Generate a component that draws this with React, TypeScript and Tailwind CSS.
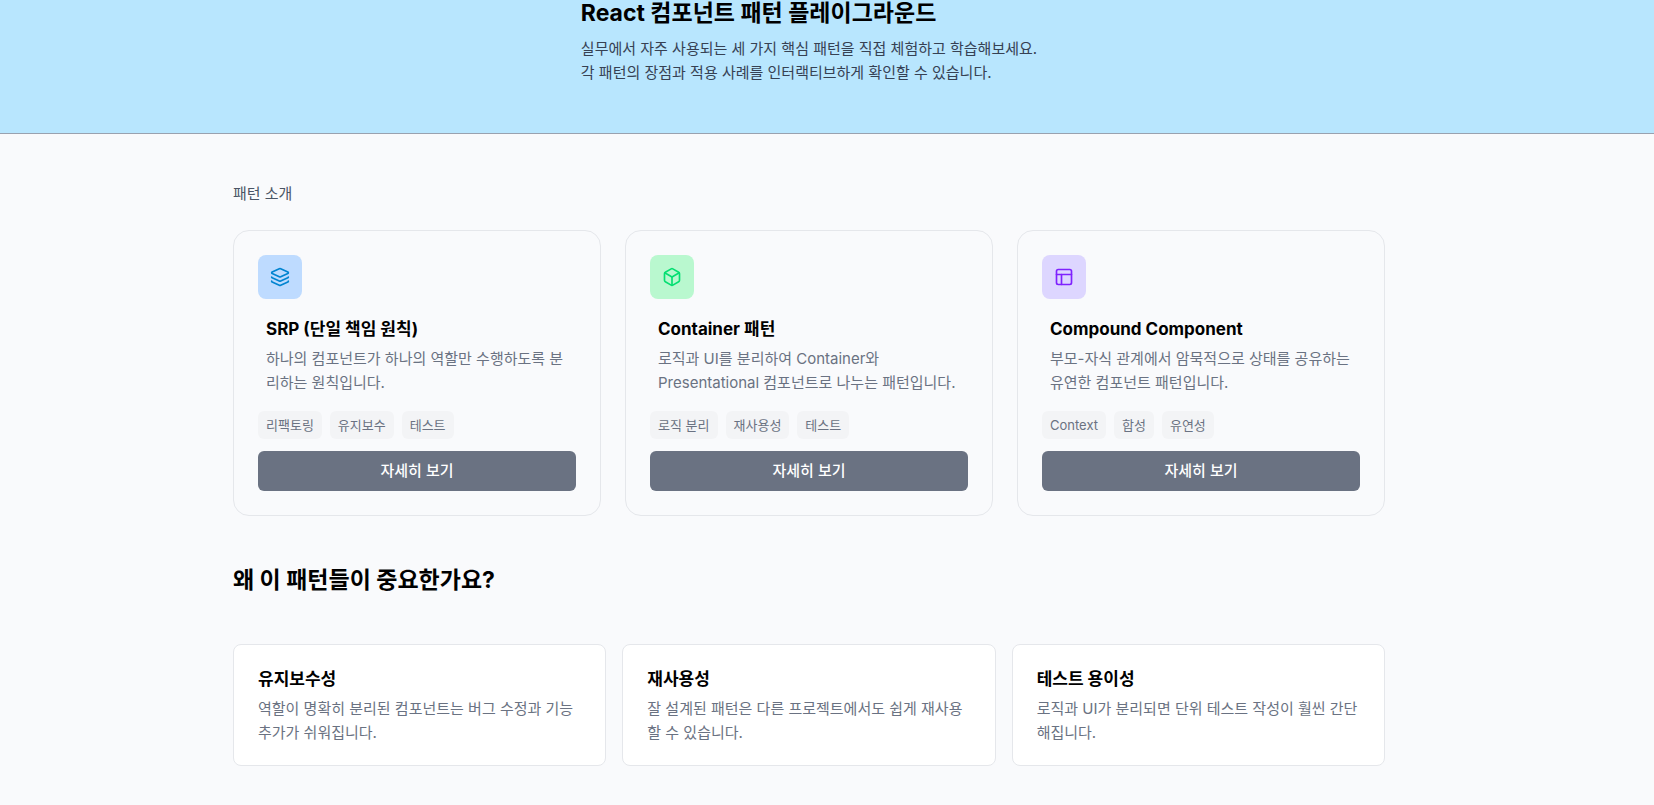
import type { ReactNode } from 'react';
import { Box, Layers, PanelsTopLeft } from 'lucide-react';

interface Pattern {
  title: string;
  description: string;
  tags: string[];
  icon: ReactNode;
  iconClass: string;
}

const patterns: Pattern[] = [
  {
    title: 'SRP (단일 책임 원칙)',
    description: '하나의 컴포넌트가 하나의 역할만 수행하도록 분리하는 원칙입니다.',
    tags: ['리팩토링', '유지보수', '테스트'],
    icon: <Layers size={20} />,
    iconClass: 'bg-blue-200 text-sky-600',
  },
  {
    title: 'Container 패턴',
    description: '로직과 UI를 분리하여 Container와 Presentational 컴포넌트로 나누는 패턴입니다.',
    tags: ['로직 분리', '재사용성', '테스트'],
    icon: <Box size={20} />,
    iconClass: 'bg-green-200 text-green-400',
  },
  {
    title: 'Compound Component',
    description: '부모-자식 관계에서 암묵적으로 상태를 공유하는 유연한 컴포넌트 패턴입니다.',
    tags: ['Context', '합성', '유연성'],
    icon: <PanelsTopLeft size={20} />,
    iconClass: 'bg-violet-200 text-violet-600',
  },
];

const reasons = [
  { title: '유지보수성', description: '역할이 명확히 분리된 컴포넌트는 버그 수정과 기능 추가가 쉬워집니다.' },
  { title: '재사용성', description: '잘 설계된 패턴은 다른 프로젝트에서도 쉽게 재사용할 수 있습니다.' },
  { title: '테스트 용이성', description: '로직과 UI가 분리되면 단위 테스트 작성이 훨씬 간단해집니다.' },
];

function Header() {
  return (
    <header className="flex justify-center border-b border-gray-400 bg-sky-200 pr-9 pb-12">
      <div>
        <h1 className="text-[23px] leading-[26px] font-bold">React 컴포넌트 패턴 플레이그라운드</h1>
        <p className="mt-[11px] text-[15px] leading-6 text-gray-700">
          실무에서 자주 사용되는 세 가지 핵심 패턴을 직접 체험하고 학습해보세요.
          <br />각 패턴의 장점과 적용 사례를 인터랙티브하게 확인할 수 있습니다.
        </p>
      </div>
    </header>
  );
}

function PatternCard({ title, description, tags, icon, iconClass }: Pattern) {
  return (
    <article className="rounded-2xl border border-gray-200 p-6">
      <div className={`flex size-11 items-center justify-center rounded-lg ${iconClass}`}>{icon}</div>
      <div className="mt-4 px-2">
        <h3 className="text-[17px] leading-7 font-bold">{title}</h3>
        <p className="mt-1 text-[15px] leading-6 text-gray-500">{description}</p>
      </div>
      <ul className="mt-4 flex gap-2">
        {tags.map((tag) => (
          <li key={tag} className="rounded-md bg-gray-100 px-2 py-1 text-[13px] leading-5 text-gray-500">
            {tag}
          </li>
        ))}
      </ul>
      <button type="button" className="mt-3 h-10 w-full rounded-md bg-gray-500 text-[15px] font-medium text-white">
        자세히 보기
      </button>
    </article>
  );
}

export default function App() {
  return (
    <div lang="ko" className="min-h-screen bg-[#f9fafc] font-['Inter','Noto_Sans_CJK_KR',sans-serif] text-black">
      <Header />
      <main className="py-12 pr-9">
        <div className="mx-auto max-w-7xl px-16">
          <section>
            <h2 className="text-[15px] leading-6 text-gray-600">패턴 소개</h2>
            <div className="mt-6 grid grid-cols-3 gap-6">
              {patterns.map((pattern) => (
                <PatternCard key={pattern.title} {...pattern} />
              ))}
            </div>
          </section>
          <section className="mt-12">
            <h2 className="text-[23px] leading-8 font-bold">왜 이 패턴들이 중요한가요?</h2>
            <div className="mt-12 grid grid-cols-3 gap-4">
              {reasons.map((reason) => (
                <article key={reason.title} className="rounded-lg border border-gray-200 bg-white px-6 py-5">
                  <h3 className="text-[17px] leading-7 font-bold">{reason.title}</h3>
                  <p className="mt-1 text-[15px] leading-6 text-gray-500">{reason.description}</p>
                </article>
              ))}
            </div>
          </section>
        </div>
      </main>
    </div>
  );
}
